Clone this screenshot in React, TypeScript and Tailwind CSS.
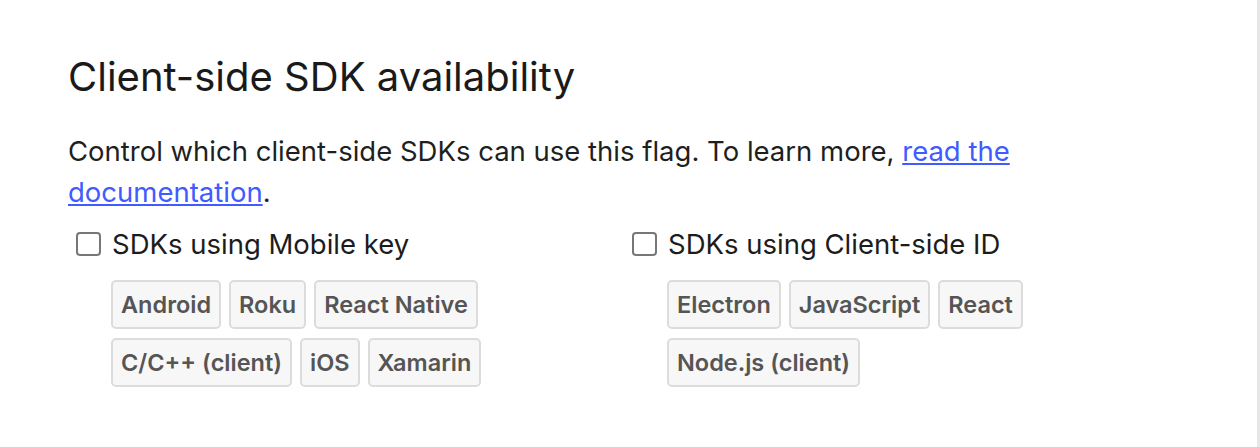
import React from "react";

const mobileSdks = [
  ["Android", "Roku", "React Native"],
  ["C/C++ (client)", "iOS", "Xamarin"],
];
const clientSdks = [["Electron", "JavaScript", "React"], ["Node.js (client)"]];

const Tag: React.FC<{ label: string }> = ({ label }) => (
  <span className="h-[49px] flex items-center px-[8px] rounded-[5px] border-2 border-[#dcdcdc] bg-[#f7f7f7] text-[23.5px] font-semibold text-[#555555]">
    {label}
  </span>
);

const SdkGroup: React.FC<{ title: string; rows: string[][] }> = ({
  title,
  rows,
}) => (
  <div className="flex flex-col">
    <label className="flex items-center gap-[11px] h-[24px]">
      <span className="w-[25px] h-[24px] rounded-[4px] border-2 border-[#777777] bg-white" />
      <span className="text-[27.5px] leading-[24px] text-[#1c1c1c]">{title}</span>
    </label>
    <div className="flex flex-col gap-[9px] mt-[24px] ml-[35px]">
      {rows.map((row, i) => (
        <div key={i} className="flex gap-[8px]">
          {row.map((sdk) => (
            <Tag key={sdk} label={sdk} />
          ))}
        </div>
      ))}
    </div>
  </div>
);

export default function App() {
  return (
    <div
      className="flex w-[1260px] h-[447px] bg-white"
      style={{ fontFamily: "Inter, 'Noto Sans', sans-serif" }}
    >
      <div className="flex-1 pl-[68px] pt-[53px]">
        <h2 className="text-[40px] leading-[48px] text-[#1a1a1a]">
          Client-side SDK availability
        </h2>
        <p className="mt-[30px] text-[27.5px] leading-[41px] text-[#1f1f1f] w-[960px]">
          Control which client-side SDKs can use this flag. To learn more,{" "}
          <a href="#" className="text-[#405bff] underline">
            read the documentation
          </a>
          .
        </p>
        <div className="grid grid-cols-[556px_556px] mt-[19px] ml-[8px]">
          <SdkGroup title="SDKs using Mobile key" rows={mobileSdks} />
          <SdkGroup title="SDKs using Client-side ID" rows={clientSdks} />
        </div>
      </div>
      <div className="w-[3px] bg-[#e6e6e6]" />
    </div>
  );
}
